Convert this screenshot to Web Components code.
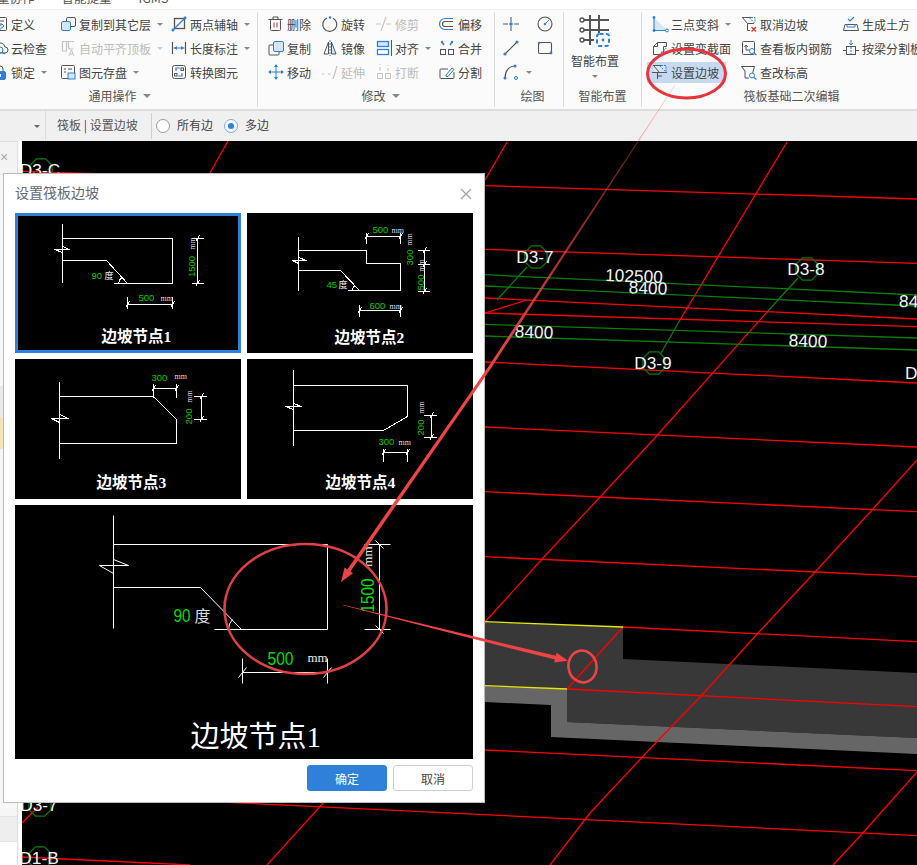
<!DOCTYPE html>
<html lang="zh">
<head>
<meta charset="utf-8">
<title>筏板 设置边坡</title>
<style>
  html, body { margin: 0; padding: 0; background: #fff; }
  body { width: 917px; height: 865px; overflow: hidden; font-family: "Noto Sans CJK SC", "Liberation Sans", sans-serif; }
</style>
</head>
<body>
<gtj-app>
  <rb-tabs><span>量协作</span><span>智能提量</span><span>IGMS</span></rb-tabs>
  <rb-ribbon>
    <rb-group label="通用操作" caret style="width:267px;margin-left:-9px;--shift:9px">
      <rb-col style="width:68px">
        <rb-item icon="define">定义</rb-item>
        <rb-item icon="cloud">云检查</rb-item>
        <rb-item icon="lock" caret>锁定</rb-item>
      </rb-col>
      <rb-col style="width:111px">
        <rb-item icon="copyLayer" caret>复制到其它层</rb-item>
        <rb-item icon="autoTop" caret disabled>自动平齐顶板</rb-item>
        <rb-item icon="save" caret>图元存盘</rb-item>
      </rb-col>
      <rb-col>
        <rb-item icon="twoPoint" caret>两点辅轴</rb-item>
        <rb-item icon="dim" caret>长度标注</rb-item>
        <rb-item icon="convert">转换图元</rb-item>
      </rb-col>
    </rb-group>
    <rb-group label="修改" caret style="width:237px;padding-left:9px;box-sizing:border-box">
      <rb-col style="width:54px">
        <rb-item icon="trash">删除</rb-item>
        <rb-item icon="copy">复制</rb-item>
        <rb-item icon="move">移动</rb-item>
      </rb-col>
      <rb-col style="width:54px">
        <rb-item icon="rotate">旋转</rb-item>
        <rb-item icon="mirror">镜像</rb-item>
        <rb-item icon="extend" disabled>延伸</rb-item>
      </rb-col>
      <rb-col style="width:63px">
        <rb-item icon="trim" disabled>修剪</rb-item>
        <rb-item icon="align" caret>对齐</rb-item>
        <rb-item icon="cut" disabled>打断</rb-item>
      </rb-col>
      <rb-col>
        <rb-item icon="offset">偏移</rb-item>
        <rb-item icon="merge">合并</rb-item>
        <rb-item icon="split">分割</rb-item>
      </rb-col>
    </rb-group>
    <rb-group label="绘图" style="width:69px;padding-left:7px;box-sizing:border-box">
      <rb-col style="width:34px">
        <rb-item icon="point"></rb-item>
        <rb-item icon="line"></rb-item>
        <rb-item icon="arc" caret></rb-item>
      </rb-col>
      <rb-col>
        <rb-item icon="circle"></rb-item>
        <rb-item icon="rect"></rb-item>
      </rb-col>
    </rb-group>
    <rb-group label="智能布置" style="width:78px">
      <rb-big icon="smart">智能布置</rb-big>
    </rb-group>
    <rb-group label="筏板基础二次编辑" last style="width:296px;padding-left:9px;box-sizing:border-box;--shift:6px">
      <rb-col style="width:89px">
        <rb-item icon="threePoint" caret>三点变斜</rb-item>
        <rb-item icon="section">设置变截面</rb-item>
        <rb-item icon="slope" active>设置边坡</rb-item>
      </rb-col>
      <rb-col style="width:102px">
        <rb-item icon="unslope">取消边坡</rb-item>
        <rb-item icon="rebar">查看板内钢筋</rb-item>
        <rb-item icon="level">查改标高</rb-item>
      </rb-col>
      <rb-col>
        <rb-item icon="earth">生成土方</rb-item>
        <rb-item icon="beamSplit">按梁分割板</rb-item>
      </rb-col>
    </rb-group>
  </rb-ribbon>
  <opt-bar>
    <span slot="crumb">筏板 <b>|</b> 设置边坡</span>
    <opt-radio>所有边</opt-radio>
    <opt-radio checked>多边</opt-radio>
  </opt-bar>
  <work-area>
    <side-rail slot="rail"></side-rail>
    <cad-view slot="view"></cad-view>
    <slope-dialog slot="float">
      <span slot="title">设置筏板边坡</span>
      <slope-card sheet="1" selected></slope-card>
      <slope-card sheet="2"></slope-card>
      <slope-card sheet="3"></slope-card>
      <slope-card sheet="4"></slope-card>
      <slope-preview slot="preview" sheet="1"></slope-preview>
      <dlg-button slot="ok" primary>确定</dlg-button>
      <dlg-button slot="cancel">取消</dlg-button>
    </slope-dialog>
  </work-area>
  <red-notes></red-notes>
</gtj-app>

<script>
const INK = '#555', BLUE = '#2f80d8', GHOST = '#c4c4c4';

// ribbon icons, 18x18 box
const svg = (body, w = 18, h = w) =>
  `<svg xmlns="http://www.w3.org/2000/svg" width="${w}" height="${h}" viewBox="0 0 ${w} ${h}" fill="none" stroke-width="1">${body}</svg>`;

const ICONS = {
  define: `<rect x="3.5" y="2.5" width="12" height="13" rx="1" stroke="${INK}"/><path d="M7 6h6M7 9h4" stroke="${INK}"/><path d="M3 15l8-6 2 2-7 6H3z" fill="#cfe2f7" stroke="${BLUE}"/>`,
  cloud: `<path d="M5 14a4 4 0 0 1 0-8 5 5 0 0 1 9 2 3 3 0 0 1 0 6z" stroke="${INK}"/><circle cx="9" cy="11" r="3" stroke="${BLUE}"/><path d="M11 13l3 2" stroke="${BLUE}" stroke-width="1.4"/>`,
  lock: `<path d="M6 8V6a3 3 0 0 1 6 0v2" stroke="${INK}"/><rect x="3.5" y="8.5" width="11" height="8" rx="1.5" fill="${BLUE}" stroke="${BLUE}"/><rect x="8" y="11" width="2" height="3" fill="#fff"/>`,
  copyLayer: `<rect x="7.5" y="2.5" width="9" height="9" rx="1.5" fill="#fff" stroke="${INK}"/><rect x="2.5" y="6.5" width="9" height="9" rx="1.5" fill="#d5e6f9" stroke="${BLUE}"/>`,
  autoTop: `<path d="M3.5 3v9h4V3M9.5 3v5a2 2 0 0 0 2 2h3" stroke="${GHOST}" stroke-width="1.2"/><path d="M3 2.5h12" stroke="${GHOST}"/><path d="M10 17l2.5-6 2.5 6M11 15h3" stroke="${GHOST}"/>`,
  save: `<rect x="2.5" y="2.5" width="13" height="13" rx="1" stroke="${INK}"/><path d="M5 6h2M9 6h4M5 9h2" stroke="${INK}"/><rect x="9" y="10" width="7" height="6" fill="#d5e6f9" stroke="${BLUE}"/>`,
  twoPoint: `<rect x="4.5" y="3.5" width="10" height="10" stroke="${INK}" stroke-width="1.3"/><path d="M2 16L16 2" stroke="${BLUE}" stroke-width="1.3"/><circle cx="3" cy="15" r="1.4" fill="${BLUE}"/><circle cx="15" cy="3" r="1.4" fill="${BLUE}"/>`,
  dim: `<path d="M2.5 3v12M15.5 3v12" stroke="${INK}" stroke-width="1.2"/><path d="M3.5 9h11" stroke="${BLUE}"/><path d="M4 9l3-2v4zM14 9l-3-2v4z" fill="${BLUE}"/>`,
  convert: `<rect x="2.5" y="2.5" width="13" height="13" rx="2" stroke="${INK}"/><path d="M6 8V5h4M12 10v3H8" stroke="${BLUE}" stroke-width="1.2"/><rect x="11" y="5" width="2.5" height="2.5" stroke="${INK}"/><rect x="4.5" y="10.5" width="2.5" height="2.5" stroke="${INK}"/>`,
  trash: `<path d="M1.5 4.5h14M6 4V2h5v2" stroke="${INK}"/><rect x="3.5" y="4.5" width="10" height="11" rx="1" stroke="${INK}"/><path d="M7 7.5v5M10 7.5v5" stroke="#d9453d" stroke-width="1.1"/>`,
  copy: `<rect x="6.5" y="2.5" width="10" height="10" rx="1.5" fill="#d5e6f9" stroke="${BLUE}"/><path d="M6 6H3a1 1 0 0 0-1 1v8a1 1 0 0 0 1 1h8a1 1 0 0 0 1-1v-2" stroke="${INK}"/>`,
  move: `<path d="M9 2v14M2 9h14" stroke="${BLUE}"/><path d="M9 1l2 3H7zM9 17l2-3H7zM1 9l3-2v4zM17 9l-3-2v4z" fill="${BLUE}"/>`,
  rotate: `<path d="M12 3.2A7 7 0 1 1 6 3" stroke="${INK}" stroke-width="1.2"/><circle cx="9" cy="2.5" r="1.3" fill="${BLUE}"/>`,
  mirror: `<path d="M7.5 3L3 15h4.5z" stroke="${INK}"/><path d="M10.5 3l4.5 12h-4.5z" fill="#d5e6f9" stroke="${INK}"/><path d="M9 1v16" stroke="${BLUE}" stroke-dasharray="2 1"/>`,
  extend: `<path d="M1 11h4M7 11h4" stroke="${GHOST}" stroke-dasharray="2.5 1.5"/><path d="M12 16L16 3" stroke="${GHOST}" stroke-width="1.2"/>`,
  trim: `<path d="M1 9h5M11 9h5" stroke="${GHOST}"/><path d="M6 16L11 2" stroke="${GHOST}" stroke-width="1.2"/>`,
  align: `<rect x="2.5" y="2.5" width="11" height="5" fill="#d5e6f9" stroke="${BLUE}" stroke-width="1.3"/><rect x="2.5" y="10.5" width="11" height="5" fill="#fff" stroke="${BLUE}" stroke-width="1.3"/><path d="M16.5 1v16" stroke="${INK}"/>`,
  cut: `<rect x="2.5" y="10.5" width="5" height="5" stroke="${GHOST}"/><rect x="10.5" y="10.5" width="5" height="5" stroke="${GHOST}"/><path d="M5 8V4M13 8V5M5 1v1M13 2v1" stroke="${GHOST}"/>`,
  offset: `<path d="M15 3.5H7a5.5 5.5 0 0 0 0 11h8" stroke="${BLUE}" stroke-width="1.2"/><path d="M15 6.5H7a2.5 2.5 0 0 0 0 5h8" stroke="${INK}" stroke-width="1.1"/>`,
  merge: `<rect x="2.5" y="10.5" width="5" height="5" stroke="${INK}"/><rect x="10.5" y="10.5" width="5" height="5" stroke="${INK}"/><path d="M4 3l2 3M14 3l-2 3" stroke="${BLUE}" stroke-width="1.5"/><circle cx="4" cy="3" r="1.2" fill="${BLUE}"/><circle cx="14" cy="3" r="1.2" fill="${BLUE}"/>`,
  split: `<path d="M16 9v5.5a1 1 0 0 1-1 1H3a1 1 0 0 1-1-1V7a1 1 0 0 1 1-1h7" stroke="${INK}"/><path d="M8 12l6-7 2 1.5-6 7H8z" stroke="${BLUE}"/>`,
  point: `<path d="M1 9h5M12 9h5M9 2v5M9 11v5" stroke="${INK}"/><circle cx="9" cy="9" r="1.8" fill="${BLUE}"/>`,
  circle: `<circle cx="9" cy="9" r="7" stroke="${INK}" stroke-width="1.1"/><path d="M9 9l4-4" stroke="${BLUE}"/><circle cx="9" cy="9" r="1.3" fill="${BLUE}"/>`,
  line: `<path d="M3 15L15 3" stroke="${INK}" stroke-width="1.1"/><circle cx="3" cy="15" r="1.6" fill="${BLUE}"/><circle cx="15" cy="3" r="1.6" fill="${BLUE}"/>`,
  rect: `<rect x="2.5" y="3.5" width="13" height="11" rx="1.5" stroke="${INK}" stroke-width="1.1"/><circle cx="15" cy="14" r="1.4" fill="${BLUE}"/><circle cx="3" cy="4" r="1.2" fill="${BLUE}"/>`,
  arc: `<path d="M3 15C3 8 7 3 13 3" stroke="${INK}" stroke-width="1.1"/><circle cx="3" cy="15" r="1.5" fill="${BLUE}"/><circle cx="13" cy="3" r="1.5" fill="${BLUE}"/><circle cx="14" cy="15" r="1.5" stroke="${BLUE}"/>`,
  threePoint: `<path d="M3.5 3v12h12z" fill="#d5e6f9"/><path d="M3 2v13.5h13" stroke="${BLUE}" stroke-width="1.1"/><circle cx="3" cy="2.5" r="1.4" fill="${BLUE}"/><circle cx="16" cy="15.5" r="1.4" stroke="${BLUE}" fill="#fff"/><circle cx="3" cy="15.5" r="1.4" fill="${BLUE}"/>`,
  section: `<path d="M2.5 7.5l4-4h9v4l-3 0v8h-10z" stroke="${INK}"/><path d="M6.5 3.5v4h-4" stroke="${INK}"/><path d="M8 16l7-7" stroke="${BLUE}" stroke-dasharray="2 1" stroke-width="1.2"/>`,
  slope: `<path d="M2.5 2.5h12v7h-12z" fill="#d5e6f9"/><path d="M2 2.5h8M2.5 2.5l6 7" stroke="${INK}"/><path d="M10 2.5h5v7" stroke="${BLUE}" stroke-dasharray="2 1"/><path d="M8.5 2.5L15 9" stroke="${BLUE}" stroke-dasharray="2 1"/><path d="M1 9.5h15M6.5 9.5V16M6.5 13H11" stroke="${INK}" stroke-width="1.1"/>`,
  unslope: `<path d="M2 2.5h9M2.5 2.5l5 6H14" stroke="${INK}"/><path d="M11 2.5h4v5M9 2.5l6 6" stroke="${BLUE}" stroke-dasharray="2 1"/><path d="M7.5 8.5v7H10" stroke="${INK}"/><path d="M11.5 12l4.5 4.5M16 12l-4.5 4.5" stroke="#e0332e" stroke-width="1.3"/>`,
  rebar: `<rect x="2.5" y="2.5" width="12" height="13" rx="1" stroke="${INK}"/><path d="M6 6v5h4M8 8L6 6 4.5 8" stroke="${INK}"/><circle cx="12" cy="12" r="2.5" stroke="${BLUE}" fill="#fff"/><path d="M14 14l2.5 2" stroke="${BLUE}" stroke-width="1.3"/>`,
  level: `<path d="M1.5 3.5h13l-2 7M1.5 3.5L5 8v7h4" stroke="${INK}"/><circle cx="12" cy="12.5" r="2.5" stroke="${BLUE}" fill="#fff"/><path d="M14 14.5l2.5 2" stroke="${BLUE}" stroke-width="1.3"/>`,
  earth: `<path d="M1.5 15.5l1.5-6h12l1.5 6z" stroke="${INK}"/><path d="M5 9V12h8V9" stroke="${BLUE}"/><path d="M6 4l2 2 4-4" stroke="${BLUE}" stroke-width="1.2"/>`,
  beamSplit: `<path d="M9 1v5M7 4l2 2 2-2" stroke="${BLUE}"/><rect x="4.5" y="7.5" width="9" height="8" stroke="${INK}"/><path d="M1 11.5h3M14 11.5h3" stroke="${INK}"/><path d="M9 8v7" stroke="${BLUE}" stroke-dasharray="2 1"/>`,
  smart: `<path d="M11 2v30M20 2v18M5 7h25M5 17h25M5 27h10" stroke="${INK}" stroke-width="2"/><circle cx="3" cy="7" r="2" stroke="${INK}" stroke-width="1.4"/><circle cx="3" cy="17" r="2" stroke="${INK}" stroke-width="1.4"/><circle cx="3" cy="27" r="2" stroke="${INK}" stroke-width="1.4"/><rect x="18" y="21" width="12" height="12" rx="2.5" stroke="${BLUE}" stroke-width="2" stroke-dasharray="4 2.5"/><circle cx="24" cy="27" r="1.4" fill="${BLUE}"/>`
};

class GtjApp extends HTMLElement {
  constructor() {
    super();
    this.attachShadow({ mode: 'open' }).innerHTML = `
      <style>
        :host { display: flex; flex-direction: column; position: relative; width: 917px; height: 865px; overflow: hidden; background: #fff; }
      </style>
      <slot></slot>`;
  }
}

class RbTabs extends HTMLElement {
  constructor() {
    super();
    this.attachShadow({ mode: 'open' }).innerHTML = `
      <style>
        :host { display: block; height: 10px; overflow: hidden; background: #fff; box-sizing: border-box; border-bottom: 1px solid #eee; flex: none; }
        .row { display: flex; margin: -9px 0 0 -3px; gap: 27px; font-size: 12.5px; line-height: 13px; color: #555; }
      </style>
      <div class="row"><slot></slot></div>`;
  }
}

class RbRibbon extends HTMLElement {
  constructor() {
    super();
    this.attachShadow({ mode: 'open' }).innerHTML = `
      <style>
        :host { display: flex; height: 101px; flex: none; box-sizing: border-box; padding-top: 2px; background: #fbfbfb; border-bottom: 2px solid #dcdcdc; overflow: hidden; }
      </style>
      <slot></slot>`;
  }
}

class RbGroup extends HTMLElement {
  constructor() {
    super();
    const caret = this.hasAttribute('caret') ? '<i></i>' : '';
    this.attachShadow({ mode: 'open' }).innerHTML = `
      <style>
        :host { display: flex; flex-direction: column; flex: none; height: 95px; box-sizing: border-box; border-right: 1px solid #dadada; }
        :host([last]) { border-right: 0; }
        .cols { display: flex; height: 72px; }
        .name { display: flex; align-items: center; justify-content: center; height: 23px; padding-right: var(--shift, 0); font-size: 12px; color: #555; }
        i { width: 0; height: 0; border: 4px solid transparent; border-top-color: #888; border-bottom: 0; margin-left: 6px; }
      </style>
      <div class="cols"><slot></slot></div>
      <div class="name">${this.getAttribute('label')}${caret}</div>`;
  }
}

class RbCol extends HTMLElement {
  constructor() {
    super();
    this.attachShadow({ mode: 'open' }).innerHTML = `
      <style>:host { display: flex; flex-direction: column; flex: none; }</style>
      <slot></slot>`;
  }
}

class RbItem extends HTMLElement {
  constructor() {
    super();
    const caret = this.hasAttribute('caret') ? '<i></i>' : '';
    this.attachShadow({ mode: 'open' }).innerHTML = `
      <style>
        :host { display: flex; align-items: center; height: 24px; font-size: 12px; color: #444; white-space: nowrap; }
        :host([disabled]) { color: #bcbcbc; }
        .row { display: flex; align-items: center; gap: 2px; }
        :host([active]) .row { height: 21px; background: #c5daf0; margin-left: -4px; padding: 0 7px 0 4px; }
        svg { display: block; flex: none; }
        i { width: 0; height: 0; border: 3.5px solid transparent; border-top-color: #888; border-bottom: 0; margin-left: 4px; }
        :host([disabled]) i { border-top-color: #ccc; }
      </style>
      <div class="row">${svg(ICONS[this.getAttribute('icon')])}<slot></slot>${caret}</div>`;
  }
}

class RbBig extends HTMLElement {
  constructor() {
    super();
    this.attachShadow({ mode: 'open' }).innerHTML = `
      <style>
        :host { display: flex; flex-direction: column; align-items: center; width: 100%; box-sizing: border-box; padding-right: 15px; font-size: 12px; color: #444; }
        svg { display: block; margin-top: 1px; }
        .t { margin-top: 5px; line-height: 16px; }
        i { width: 0; height: 0; border: 3.5px solid transparent; border-top-color: #888; border-bottom: 0; margin-top: 6px; }
      </style>
      ${svg(ICONS[this.getAttribute('icon')], 32, 35)}
      <div class="t"><slot></slot></div><i></i>`;
  }
}

class OptBar extends HTMLElement {
  constructor() {
    super();
    this.attachShadow({ mode: 'open' }).innerHTML = `
      <style>
        :host { display: flex; align-items: center; height: 30px; flex: none; background: #f0f0f0; font-size: 12px; color: #555; }
        .drop { display: flex; align-items: center; justify-content: flex-end; width: 46px; height: 30px; box-sizing: border-box; padding-right: 5px; border-right: 1px solid #dcdcdc; }
        .drop i { width: 0; height: 0; border: 3px solid transparent; border-top-color: #666; border-bottom: 0; }
        .crumb { width: 106px; height: 26px; line-height: 24px; box-sizing: border-box; padding-left: 11px; border-right: 1px solid #cfcfcf; }
        ::slotted([slot=crumb]) { white-space: pre; }
        .radios { display: flex; padding-left: 4px; gap: 11px; }
      </style>
      <div class="drop"><i></i></div>
      <div class="crumb"><slot name="crumb"></slot></div>
      <div class="radios"><slot></slot></div>`;
    this.querySelector('b').style.cssText = 'font-weight:400;color:#5b2a6b';
  }
}

class OptRadio extends HTMLElement {
  constructor() {
    super();
    this.attachShadow({ mode: 'open' }).innerHTML = `
      <style>
        :host { display: flex; align-items: center; gap: 7px; color: #444; line-height: 16px; }
        .c { width: 14px; height: 14px; box-sizing: border-box; border: 1px solid #999; border-radius: 50%; background: #fff; display: flex; align-items: center; justify-content: center; }
        :host([checked]) .c { border-color: #79a9de; }
        :host([checked]) .c::after { content: ""; width: 6px; height: 6px; border-radius: 50%; background: ${BLUE}; }
        .l { margin-top: -2px; }
      </style>
      <span class="c"></span><span class="l"><slot></slot></span>`;
  }
}

class WorkArea extends HTMLElement {
  constructor() {
    super();
    this.attachShadow({ mode: 'open' }).innerHTML = `
      <style>
        :host { display: flex; flex: 1; min-height: 0; position: relative; }
        .float { position: absolute; left: 3px; top: 32px; }
      </style>
      <slot name="rail"></slot>
      <slot name="view"></slot>
      <div class="float"><slot name="float"></slot></div>`;
  }
}

class SideRail extends HTMLElement {
  constructor() {
    super();
    this.attachShadow({ mode: 'open' }).innerHTML = `
      <style>
        :host { display: flex; flex-direction: column; width: 22px; flex: none; box-sizing: border-box; padding-right: 4px; background: #fff; }
        div { border-right: 1px solid #dcdcdc; border-bottom: 1px solid #e4e4e4; background: #f3f3f3; }
        .x { height: 34px; color: #aaa; font: 14px/30px "Liberation Sans", sans-serif; border-top: 1px solid #ddd; box-sizing: border-box; }
        .a { height: 211px; background: #f7f7f7; }
        .b { height: 30px; background: #eaeaea; }
        .c { height: 30px; background: #f5e2b8; }
        .d { height: 367px; background: #f6f6f6; }
        .e { height: 24px; background: #eeeeee; }
        .f { flex: 1; background: #fff; border-bottom: 0; }
      </style>
      <div class="x">×</div><div class="a"></div><div class="b"></div><div class="c"></div><div class="d"></div><div class="e"></div><div class="f"></div>`;
  }
}

// the model view, page coordinates
const RED = [
  [22,171.4,917,199],[485,249.3,917,263.3],[485,298,917,319],[485,313,917,326.7],[485,362,917,383],
  [485,427,917,447],[485,491.7,917,511.7],[485,556.7,917,576.7],[623,627,917,641.7],[567,689,917,706.7],
  [485,750,917,770.7],[222,802,917,835.6],[22,857,190,865],
  [507,142,485,180],[787,142,680,320],[767,312,653,440,600,497,543,558,485,622],[527,300,485,313],
  [917,460,872,510,815,572,758,633,702,695,647,752,590,813,550,865],[917,772,861,835,833,865],
  [623,627,567,689],[228,141,210,173],[325,801,267,865],[22,823,38,807]
];
const GREEN = [
  [485,274.7,917,295],[485,286,917,306],[485,324.3,917,338],[485,336,917,350],
  [527,267,497,300],[680,320,661,353],[798,278,767,312]
];
const AXES = [
  ['D3-7',536,257],['D3-8',807,269],['D3-9',654,363],['D3-C',41,170],['D3-7',40,805],['D1-B',40,858]
];
const DIMS = [['102500',634,276],['8400',648,288],['8400',534,332],['8400',808,341]];

const poly = (pts, color) => {
  const p = [];
  for (let i = 0; i < pts.length; i += 2) p.push(pts[i] + ',' + pts[i + 1]);
  return `<polyline points="${p.join(' ')}" fill="none" stroke="${color}" stroke-width="1.3"/>`;
};
const octagon = (cx, cy, r) => {
  const p = [];
  for (let i = 0; i < 8; i++) {
    const a = Math.PI / 8 + i * Math.PI / 4;
    p.push((cx + r * Math.cos(a)).toFixed(1) + ',' + (cy + r * Math.sin(a)).toFixed(1));
  }
  return `<polygon points="${p.join(' ')}" fill="none" stroke="#0a7d0a" stroke-width="1.2"/>`;
};

class CadView extends HTMLElement {
  constructor() {
    super();
    const labels = AXES.map(([t, x, y]) => octagon(x, y, 12)).join('');
    const texts = AXES.map(([t, x, y]) => `<text x="${x - 1}" y="${y + 6}" text-anchor="middle">${t}</text>`).join('')
      + DIMS.map(([t, x, y]) => `<text x="${x}" y="${y + 6}" text-anchor="middle" transform="rotate(2 ${x} ${y})">${t}</text>`).join('')
      + `<text x="899" y="307" transform="rotate(2 899 301)">84</text><text x="905" y="379">D</text>`;
    this.attachShadow({ mode: 'open' }).innerHTML = `
      <style>
        :host { display: block; flex: 1; background: #000; overflow: hidden; }
        svg { display: block; }
        text { font: 17.3px "Liberation Sans", sans-serif; fill: #f4f4f4; }
      </style>
      <svg xmlns="http://www.w3.org/2000/svg" width="895" height="724" viewBox="22 141 895 724">
        <polygon points="485,621.7 623,627 623,659 917,673 917,738 567,722 567,689 485,685.7" fill="#383838"/>
        <polygon points="485,685.7 567,689 567,722 917,738 917,754 551,737 551,705 485,702" fill="#666"/>
        ${RED.map(l => poly(l, '#f00')).join('')}
        ${GREEN.map(l => poly(l, '#0a7d0a')).join('')}
        <path d="M485 621.7L623 627M485 685.7L567 689" stroke="#e6e600" stroke-width="1.3"/>
        ${labels}${texts}
      </svg>`;
  }
}

// drawings of the four slope details, coordinates inside a 226x140 card
const tickH = (x, y) => `M${x - 2} ${y + 3}L${x + 2} ${y - 3}`;
const SHEETS = {
  1: {
    d: `M47 10V69M47 25H157V70H98M47 47H91L112 70M39 36H54L47 33M39 36L47 39M103 70Q104 65 107 64
        M182 25V70M176 25H188M176 70H188M112 91H157M112 83V95M157 83V95${tickH(112, 91)}${tickH(157, 91)}${tickH(182, 25)}${tickH(182, 70)}`,
    t: [['90', 76, 65, 'g'], ['度', 89, 65, 'w'], ['1500', 179, 53, 'g', 1], ['mm', 179, 30, 'm', 1], ['500', 123, 87, 'g'], ['mm', 145, 87, 'm']],
    title: ['边坡节点1', 86, 128]
  },
  2: {
    d: `M51 23V77M51 37H119V50H153V77H100M51 57H93L112 77M45 47H59L51 44M45 47L51 50M105 77Q105 73 108 72
        M119 23H153M119 19V30M153 19V30${tickH(119, 23)}${tickH(153, 23)}
        M112 97H153M112 91V103M153 91V103${tickH(112, 97)}${tickH(153, 97)}
        M177 37V78M170 37H182M170 51H182M170 78H182${tickH(177, 37)}${tickH(177, 51)}${tickH(177, 78)}`,
    t: [['45', 79, 74, 'g'], ['度', 91, 74, 'w'], ['500', 125, 19, 'g'], ['mm', 144, 19, 'm'], ['600', 122, 95, 'g'], ['mm', 142, 95, 'm'],
        ['300', 165, 44, 'g', 1], ['mm', 164, 26, 'm', 1], ['500', 176, 69, 'g', 1], ['mm', 176, 52, 'm', 1]],
    title: ['边坡节点2', 87, 129]
  },
  3: {
    d: `M44 22V99M44 37H138L161 60V84H44M36 59H53L44 55M36 59L44 63
        M138 29H161M138 24V38M161 24V38${tickH(138, 29)}${tickH(161, 29)}
        M186 37V60M178 37H191M178 60H191${tickH(186, 37)}${tickH(186, 60)}`,
    t: [['300', 136, 21, 'g'], ['mm', 159, 19, 'm'], ['200', 176, 57, 'g', 1], ['mm', 176, 37, 'm', 1]],
    title: ['边坡节点3', 81, 128]
  },
  4: {
    d: `M46 10V86M46 26H160V57L136 71H46M38 47H54L46 44M38 47L46 50
        M184 56V78M176 56H189M176 78H189${tickH(184, 56)}${tickH(184, 78)}
        M136 93H160M136 89V102M160 89V102${tickH(136, 93)}${tickH(160, 93)}`,
    t: [['200', 176, 68, 'g', 1], ['mm', 176, 48, 'm', 1], ['300', 131, 85, 'g'], ['mm', 151, 85, 'm']],
    title: ['边坡节点4', 78, 128]
  }
};

class SlopeCard extends HTMLElement {
  connectedCallback() {
    if (this.shadowRoot) return;
    const s = SHEETS[this.getAttribute('sheet')];
    const texts = s.t.map(([v, x, y, k, rot]) =>
      `<text class="${k}" x="${x}" y="${y}"${rot ? ` text-anchor="middle" transform="rotate(-90 ${x} ${y})"` : ''}>${v}</text>`).join('');
    this.attachShadow({ mode: 'open' }).innerHTML = `
      <style>
        :host { display: block; height: 140px; background: #000; }
        :host([selected]) { outline: 3px solid ${BLUE}; outline-offset: -3px; }
        svg { display: block; }
        text { font-family: "Liberation Sans", sans-serif; font-size: 9.5px; }
        .g { fill: #0c0; }
        .w { fill: #eee; font-size: 9px; font-family: "Noto Sans CJK SC", sans-serif; }
        .m { fill: #dde; font-size: 8px; font-family: "Liberation Serif", serif; }
        .title { fill: #fff; font-size: 15.5px; font-weight: 700; font-family: "Liberation Serif", "Noto Sans CJK SC", serif; }
      </style>
      <svg xmlns="http://www.w3.org/2000/svg" width="226" height="140" viewBox="-0.5 -0.5 226 140">
        <path d="${s.d}" fill="none" stroke="#fff" shape-rendering="crispEdges"/>
        ${texts}
        <text class="title" x="${s.title[1]}" y="${s.title[2]}">${s.title[0]}</text>
      </svg>`;
  }
}

class SlopePreview extends HTMLElement {
  constructor() {
    super();
    this.attachShadow({ mode: 'open' }).innerHTML = `
      <style>
        :host { display: block; height: 254px; background: #000; }
        svg { display: block; }
        text { font-family: "Liberation Sans", sans-serif; }
        .g { fill: #0d0; font-size: 18px; }
        .w { fill: #ddd; font-size: 16px; font-family: "Noto Sans CJK SC", sans-serif; }
        .m { fill: #eee; font-size: 13px; font-family: "Liberation Serif", serif; }
        .title { fill: #fff; font-size: 29px; font-family: "Liberation Serif", "Noto Sans CJK SC", serif; }
      </style>
      <svg xmlns="http://www.w3.org/2000/svg" width="458" height="254" viewBox="-0.5 -0.5 458 254">
        <path d="M98 10V123M98 39H312V124H199M98 82H185L226 124M84 60H113L98 54M84 60L98 68M213 124Q213 118 217 114
                 M364 39V124M349 39H375M349 124H375M360 35L368 43M360 120L368 128
                 M227 167H312M227 153V178M312 153V178M223 172L231 162M308 172L316 162"
              fill="none" stroke="#fff"/>
        <text class="g" x="158" y="116" textLength="17" lengthAdjust="spacingAndGlyphs">90</text>
        <text class="w" x="179" y="116">度</text>
        <text class="g" x="358" y="90" text-anchor="middle" textLength="34" lengthAdjust="spacingAndGlyphs" transform="rotate(-90 358 90)">1500</text>
        <text class="m" x="356" y="51" text-anchor="middle" transform="rotate(-90 356 51)">mm</text>
        <text class="g" x="252" y="159" textLength="26" lengthAdjust="spacingAndGlyphs">500</text>
        <text class="m" x="292" y="156">mm</text>
        <text class="title" x="175" y="241">边坡节点1</text>
      </svg>`;
  }
}

class SlopeDialog extends HTMLElement {
  constructor() {
    super();
    this.attachShadow({ mode: 'open' }).innerHTML = `
      <style>
        :host { display: flex; flex-direction: column; width: 482px; height: 630px; box-sizing: border-box; padding: 0 11px 11px; background: #fff; border: 1px solid #bcbcbc; }
        .head { display: flex; align-items: center; justify-content: space-between; height: 39px; box-sizing: border-box; padding-bottom: 4px; font-size: 14px; color: #5f6b78; }
        .x { width: 12px; height: 12px; margin-right: 1px; margin-top: 4px; }
        .x svg { display: block; }
        .grid { display: grid; grid-template-columns: 226px 226px; gap: 6px; }
        .prev { margin-top: 6px; }
        .foot { display: flex; justify-content: flex-end; gap: 6px; margin-top: 6px; }
      </style>
      <div class="head"><slot name="title"></slot>
        <span class="x"><svg xmlns="http://www.w3.org/2000/svg" width="12" height="12" viewBox="0 0 12 12"><path d="M1 1l10 10M11 1L1 11" stroke="#a0a0a0" stroke-width="1.1"/></svg></span>
      </div>
      <div class="grid"><slot></slot></div>
      <div class="prev"><slot name="preview"></slot></div>
      <div class="foot"><slot name="ok"></slot><slot name="cancel"></slot></div>`;
  }
}

class DlgButton extends HTMLElement {
  constructor() {
    super();
    this.attachShadow({ mode: 'open' }).innerHTML = `
      <style>
        :host { display: flex; align-items: center; justify-content: center; width: 80px; height: 26px; box-sizing: border-box; border: 1px solid #d0d0d0; border-radius: 3px; background: #fff; font-size: 12px; color: #444; }
        :host([primary]) { background: ${BLUE}; border-color: ${BLUE}; color: #fff; }
      </style>
      <slot></slot>`;
  }
}

// hand drawn red marks that lie over the whole screenshot
class RedNotes extends HTMLElement {
  constructor() {
    super();
    this.attachShadow({ mode: 'open' }).innerHTML = `
      <style>
        :host { position: absolute; left: 0; top: 0; width: 917px; height: 865px; pointer-events: none; }
        svg { display: block; }
      </style>
      <svg xmlns="http://www.w3.org/2000/svg" width="917" height="865" viewBox="0 0 917 865" fill="none">
        <defs>
          <linearGradient id="fade" gradientUnits="userSpaceOnUse" x1="675" y1="85" x2="490" y2="367">
            <stop offset="0" stop-color="#f04444" stop-opacity="0.25"/>
            <stop offset="1" stop-color="#f04444"/>
          </linearGradient>
        </defs>
        <ellipse cx="686.5" cy="73.5" rx="39" ry="24.5" stroke="#e8343a" stroke-width="3"/>
        <polygon fill="url(#fade)" points="675.3,85.2 491.3,367.8 350.3,571.4 353,573.2 341,582 344.6,567.6 347.3,569.4 488.7,366.2 674.8,84.8"/>
        <ellipse cx="305.5" cy="609" rx="81" ry="65" stroke="#e04044" stroke-width="2.6"/>
        <polygon fill="#f04444" points="342.9,605.3 470,638 555,659.6 554.2,662.5 568,660.7 556.6,652.7 555.8,655.8 470.6,635.6 343.1,604.7"/>
        <ellipse cx="582.5" cy="666.5" rx="14" ry="16" stroke="#f04444" stroke-width="2.6" transform="rotate(-10 582.5 666.5)"/>
      </svg>`;
  }
}

customElements.define('gtj-app', GtjApp);
customElements.define('rb-tabs', RbTabs);
customElements.define('rb-ribbon', RbRibbon);
customElements.define('rb-group', RbGroup);
customElements.define('rb-col', RbCol);
customElements.define('rb-item', RbItem);
customElements.define('rb-big', RbBig);
customElements.define('opt-radio', OptRadio);
customElements.define('opt-bar', OptBar);
customElements.define('side-rail', SideRail);
customElements.define('cad-view', CadView);
customElements.define('slope-card', SlopeCard);
customElements.define('slope-preview', SlopePreview);
customElements.define('dlg-button', DlgButton);
customElements.define('slope-dialog', SlopeDialog);
customElements.define('work-area', WorkArea);
customElements.define('red-notes', RedNotes);
</script>
</body>
</html>
